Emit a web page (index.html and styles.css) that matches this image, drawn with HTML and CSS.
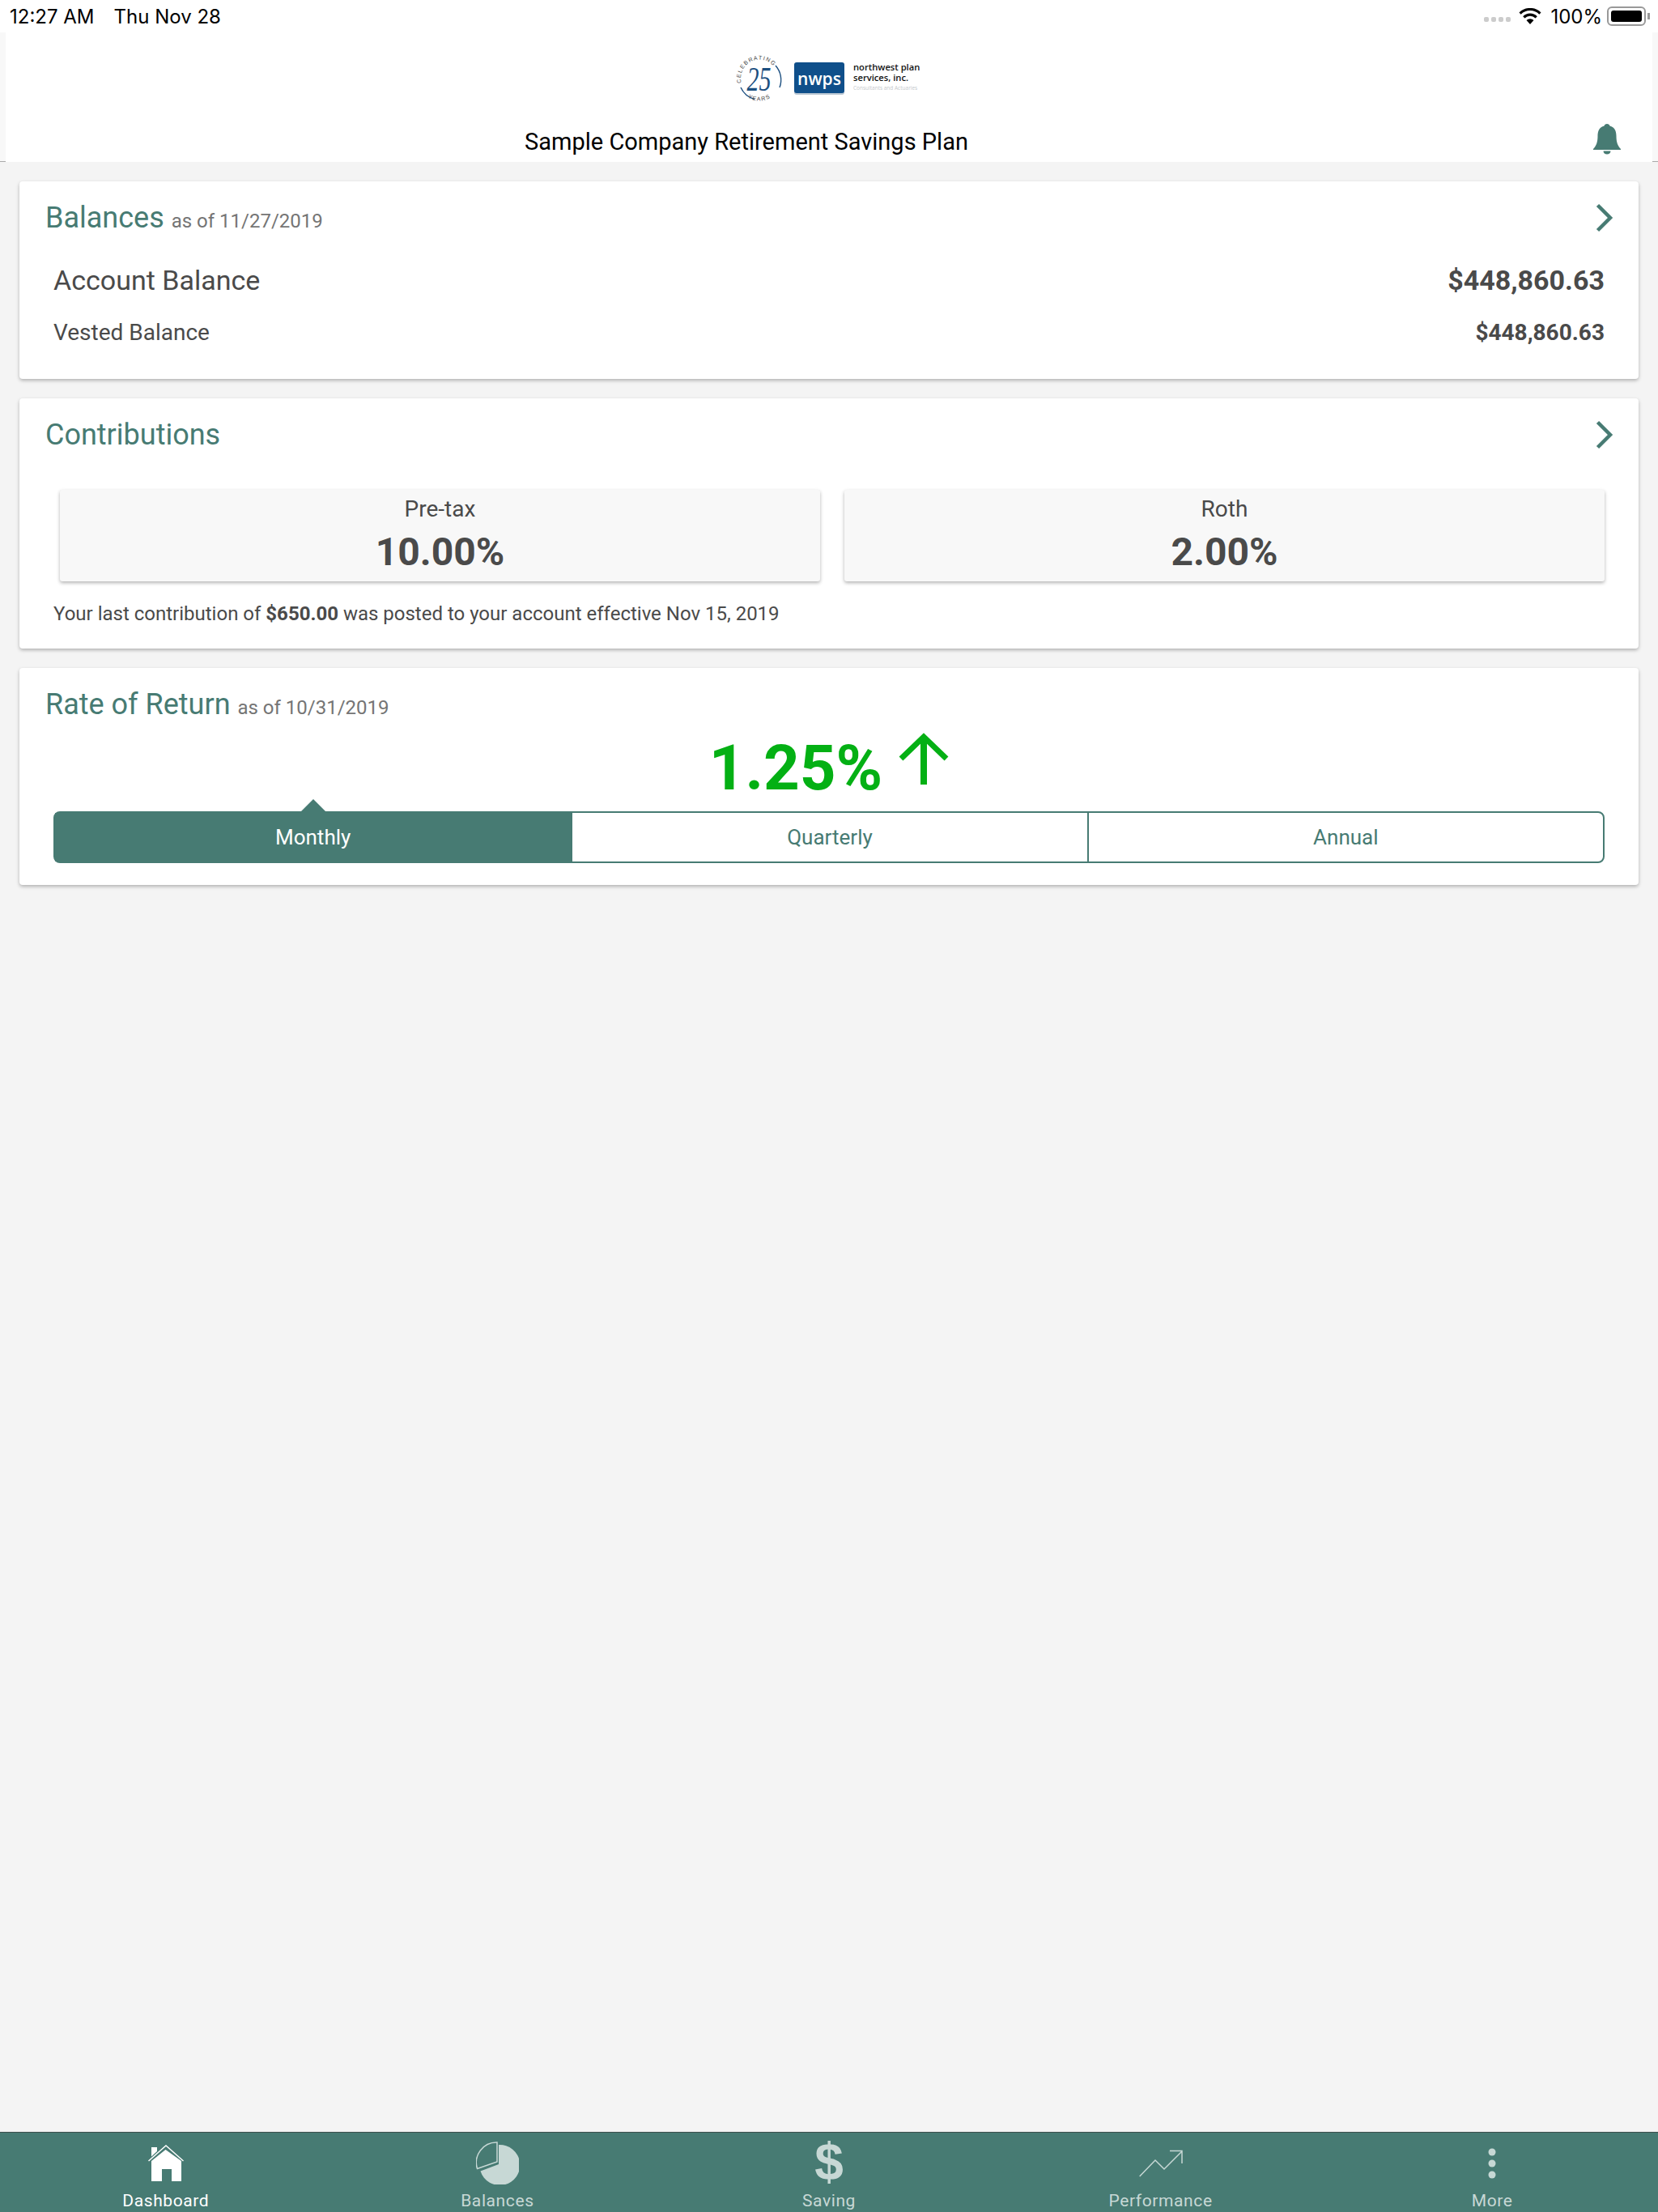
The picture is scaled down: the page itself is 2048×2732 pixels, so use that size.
FILE: index.html
```html
<!DOCTYPE html>
<html>

<head>
    <meta charset="utf-8" />
    <title>Dashboard</title>
    <link rel="stylesheet" href="styles.css">
</head>

<body>
    <div class="page">
        <div class="status-bar">
            <div class="status-left"><span>12:27 AM</span><span>Thu Nov 28</span></div>
            <div class="status-right">
                <span class="signal-dots"><i></i><i></i><i></i><i></i></span>
                <svg class="wifi-icon" width="28" height="20" viewBox="0 0 28 20">
                    <path d="M14 20 L9.5 15 A6.5 6.5 0 0 1 18.5 15 Z" fill="#000" />
                    <path d="M6.3 11.3 A11 11 0 0 1 21.7 11.3" fill="none" stroke="#000" stroke-width="3.2" />
                    <path d="M1.6 6.6 A17.6 17.6 0 0 1 26.4 6.6" fill="none" stroke="#000" stroke-width="3.2" />
                </svg>
                <span class="battery-pct">100%</span>
                <span class="battery"><span class="battery-fill"></span></span>
                <span class="battery-tip"></span>
            </div>
        </div>

        <div class="header-wrap">
            <div class="app-header">
                <div class="logo-row">
                    <svg width="240" height="66" viewBox="0 0 240 66">
                        <g fill="none" stroke="#1c4f80" stroke-width="1.4">
                            <path d="M15 44 A26.5 26.5 0 0 0 32 58.5" />
                            <path d="M58 17 A26.5 26.5 0 0 1 63 44" />
                        </g>
                        <text x="37.5" y="48" class="logo-25" textLength="30" lengthAdjust="spacingAndGlyphs">25</text>
                        <path id="arcTop" d="M15.8 38.5 A23 23 0 0 1 56.8 19.3" fill="none" />
                        <text class="logo-arc"><textPath href="#arcTop">CELEBRATING</textPath></text>
                        <path id="arcBottom" d="M19 53 A28 28 0 0 0 57 53" fill="none" />
                        <text class="logo-arc"><textPath href="#arcBottom" startOffset="50%" text-anchor="middle">YEARS</textPath></text>
                        <rect x="81" y="14" width="62" height="39" rx="3" fill="#b9c6d2" />
                        <rect x="81" y="13" width="62" height="38" rx="3" fill="#0f4f8a" />
                        <text x="112" y="41" class="logo-nwps">nwps</text>
                        <text x="154" y="23" class="logo-name">northwest plan</text>
                        <text x="154" y="36" class="logo-name">services, inc.</text>
                        <text x="154" y="47" class="logo-sub">Consultants and Actuaries</text>
                    </svg>
                </div>
                <div class="title-row">
                    <div class="plan-title">Sample Company Retirement Savings Plan</div>
                    <div class="bell-box">
                        <svg width="34" height="38" viewBox="0 0 34 38">
                            <path d="M17 0 C19 0 20 1 20.5 2.5 C26.5 4 28.5 9 28.5 15 C28.5 22 30 27 34 31 L34 32 L0 32 L0 31 C4 27 5.5 22 5.5 15 C5.5 9 7.5 4 13.5 2.5 C14 1 15 0 17 0 Z" fill="#477b73" />
                            <path d="M12.5 33.5 L21.5 33.5 C21.5 36 19.5 37.5 17 37.5 C14.5 37.5 12.5 36 12.5 33.5 Z" fill="#477b73" />
                        </svg>
                    </div>
                </div>
            </div>
        </div>

        <div class="content">
            <section class="card balances-card">
                <div class="card-head">
                    <h2>Balances <small>as of 11/27/2019</small></h2>
                    <svg class="chevron" width="22" height="36" viewBox="0 0 22 36">
                        <path d="M2.5 2.5 L18 18 L2.5 33.5" fill="none" stroke="#477b73" stroke-width="4.5" />
                    </svg>
                </div>
                <div class="balance-row balance-main"><span>Account Balance</span><b>$448,860.63</b></div>
                <div class="balance-row balance-sub"><span>Vested Balance</span><b>$448,860.63</b></div>
            </section>

            <section class="card contrib-card">
                <div class="card-head">
                    <h2>Contributions</h2>
                    <svg class="chevron" width="22" height="36" viewBox="0 0 22 36">
                        <path d="M2.5 2.5 L18 18 L2.5 33.5" fill="none" stroke="#477b73" stroke-width="4.5" />
                    </svg>
                </div>
                <div class="contrib-boxes">
                    <div class="contrib-box">
                        <div class="contrib-label">Pre-tax</div>
                        <div class="contrib-value">10.00%</div>
                    </div>
                    <div class="contrib-box">
                        <div class="contrib-label">Roth</div>
                        <div class="contrib-value">2.00%</div>
                    </div>
                </div>
                <p class="contrib-note">Your last contribution of <b>$650.00</b> was posted to your account effective Nov 15, 2019</p>
            </section>

            <section class="card return-card">
                <div class="card-head">
                    <h2>Rate of Return <small>as of 10/31/2019</small></h2>
                </div>
                <div class="return-value">
                    <span>1.25%</span>
                    <svg class="return-arrow" width="62" height="64" viewBox="0 0 62 64">
                        <path d="M31 64 L31 4" fill="none" stroke="#04b014" stroke-width="8" />
                        <path d="M3 32 L31 5 L59 32" fill="none" stroke="#04b014" stroke-width="7" />
                    </svg>
                </div>
                <div class="period-tabs">
                    <div class="period-tab active">Monthly</div>
                    <div class="period-tab">Quarterly</div>
                    <div class="period-tab">Annual</div>
                </div>
            </section>
        </div>

        <nav class="tab-bar">
            <div class="tab-item current">
                <div class="tab-icon">
                    <svg class="icon-home" width="44" height="45" viewBox="0 0 44 45">
                        <path d="M4 20 L21.5 6 L41 20 L41 45 L29 45 L29 30 L17 30 L17 45 L4 45 Z" fill="#fff" />
                        <path d="M0.5 20 L22 1 L43.5 20" fill="none" stroke="#fff" stroke-width="1.5" />
                        <path d="M4 3 L11 3 L11 8 L4 14.5 Z" fill="#fff" />
                    </svg>
                </div>
                <span>Dashboard</span>
            </div>
            <div class="tab-item">
                <div class="tab-icon">
                    <svg width="53" height="53" viewBox="0 0 53 53">
                        <path d="M28 4 A25 25 0 1 1 5.5 36.5 L28 28 Z" fill="#c7d8d5" />
                        <path d="M26 1 A25 25 0 0 0 1.5 33.5 L26 25 Z" fill="none" stroke="#c7d8d5" stroke-width="1.5" />
                    </svg>
                </div>
                <span>Balances</span>
            </div>
            <div class="tab-item">
                <div class="tab-icon">
                    <div class="dollar-icon">$</div>
                </div>
                <span>Saving</span>
            </div>
            <div class="tab-item">
                <div class="tab-icon">
                    <svg class="icon-trend" width="54" height="34" viewBox="0 0 54 34">
                        <path d="M0.7 33 L20 13 L31 24 L53 2 M38 1.5 L53 1.5 L53 17" fill="none" stroke="#c7d8d5" stroke-width="1.5" />
                    </svg>
                </div>
                <span>Performance</span>
            </div>
            <div class="tab-item">
                <div class="tab-icon">
                    <svg class="icon-more" width="10" height="38" viewBox="0 0 10 38">
                        <circle cx="5" cy="5" r="4.5" fill="#c7d8d5" />
                        <circle cx="5" cy="19" r="4.5" fill="#c7d8d5" />
                        <circle cx="5" cy="33" r="4.5" fill="#c7d8d5" />
                    </svg>
                </div>
                <span>More</span>
            </div>
        </nav>
    </div>
</body>

</html>
```

FILE: styles.css
```css
* {
    box-sizing: border-box;
}

body {
    margin: 0;
    background-color: #f4f4f4;
    font-family: Roboto, "Liberation Sans", sans-serif;
    color: #4a4a4a;
}

.page {
    height: 2732px;
    display: flex;
    flex-direction: column;
}

/* ios status bar */
.status-bar {
    height: 40px;
    padding: 0 10px 0 12px;
    background-color: #fff;
    display: flex;
    justify-content: space-between;
    align-items: center;
    font-family: Inter, "Liberation Sans", sans-serif;
    font-size: 24px;
    color: #000;
}

.status-left span:first-child {
    margin-right: 24px;
}

.status-right {
    display: flex;
    align-items: center;
}

.signal-dots {
    display: flex;
    gap: 3px;
    margin: 8px 10px 0 0;
}

.signal-dots i {
    width: 6px;
    height: 6px;
    border-radius: 2px;
    background-color: #ccc;
}

.battery-pct {
    margin: 0 6px 0 11px;
}

.battery {
    width: 48px;
    height: 24px;
    padding: 3px;
    border: 2px solid #999;
    border-radius: 6px;
}

.battery-fill {
    display: block;
    height: 100%;
    border-radius: 3px;
    background-color: #000;
}

.battery-tip {
    width: 3px;
    height: 8px;
    margin-left: 2px;
    background-color: #999;
}

/* header with logo */
.header-wrap {
    height: 160px;
    padding: 0 7px;
    background-color: #f8f8f8;
    border-bottom: 1px solid #aaa;
}

.app-header {
    height: 160px;
    position: relative;
    background-color: #fff;
    display: flex;
    flex-direction: column;
}

.logo-row {
    height: 116px;
    padding: 24px 0 0 893px;
}

.title-row {
    display: flex;
    align-items: flex-start;
}

.plan-title {
    flex: 1;
    text-align: center;
    font-size: 29px;
    line-height: 38px;
    color: #000;
}

.bell-box {
    width: 204px;
    margin-top: -3px;
    padding-left: 131px;
}

.logo-25 {
    font-family: "Liberation Serif", serif;
    font-size: 43px;
    font-style: italic;
    fill: #1c4f80;
    text-anchor: middle;
}

.logo-arc {
    font-family: "Liberation Sans", sans-serif;
    font-size: 7px;
    letter-spacing: 1.2px;
    fill: #444;
}

.logo-nwps {
    font-family: "Open Sans", sans-serif;
    font-size: 21px;
    font-weight: 600;
    fill: #fff;
    text-anchor: middle;
}

.logo-name {
    font-family: "Open Sans", sans-serif;
    font-size: 11.2px;
    font-weight: 600;
    fill: #111;
}

.logo-sub {
    font-family: "Open Sans", sans-serif;
    font-size: 6.5px;
    fill: #c5c9cc;
}

/* cards */
.content {
    flex: 1;
    padding: 24px 24px 0;
    display: flex;
    flex-direction: column;
    gap: 24px;
}

.card {
    background-color: #fff;
    border-radius: 4px;
    box-shadow: 0 2px 4px rgba(0, 0, 0, 0.28);
    padding: 0 42px 0 32px;
}

.card-head {
    height: 90px;
    display: flex;
    justify-content: space-between;
    align-items: center;
}

.card-head h2 {
    margin: 0;
    font-size: 36px;
    font-weight: 400;
    color: #477b73;
}

.card-head small {
    font-size: 24px;
    color: #757575;
}

.chevron {
    margin-right: -11px;
}

.balances-card {
    height: 244px;
}

.balance-row {
    display: flex;
    justify-content: space-between;
    padding-left: 10px;
}

.balance-main {
    font-size: 34px;
    line-height: 48px;
    margin-top: 8px;
}

.balance-sub {
    font-size: 28px;
    line-height: 40px;
    margin-top: 21px;
}

.contrib-card {
    height: 309px;
}

.contrib-boxes {
    margin-top: 23px;
    padding-left: 18px;
    display: grid;
    grid-template-columns: 1fr 1fr;
    gap: 30px;
}

.contrib-box {
    height: 113px;
    background-color: #f8f8f8;
    border-radius: 3px;
    box-shadow: 0 2px 4px rgba(0, 0, 0, 0.3);
    text-align: center;
}

.contrib-label {
    padding-top: 4px;
    font-size: 28px;
    line-height: 40px;
}

.contrib-value {
    font-size: 48px;
    font-weight: 700;
    line-height: 66px;
}

.contrib-note {
    margin: 22px 0 0 10px;
    font-size: 24px;
    line-height: 36px;
}

.return-card {
    height: 268px;
}

.return-value {
    height: 76px;
    margin-top: -5px;
    padding-left: 10px;
    display: flex;
    justify-content: center;
    align-items: center;
    gap: 20px;
    font-size: 78px;
    font-weight: 700;
    color: #04b014;
}

.return-arrow {
    margin-bottom: 22px;
}

.period-tabs {
    margin: 16px 0 0 10px;
    height: 64px;
    display: grid;
    grid-template-columns: repeat(3, 1fr);
    border: 2px solid #477b73;
    border-radius: 8px;
    font-size: 26px;
    color: #477b73;
}

.period-tab {
    display: flex;
    align-items: center;
    justify-content: center;
    border-left: 2px solid #477b73;
}

.period-tab.active {
    position: relative;
    background-color: #477b73;
    color: #fff;
    border-left: 0;
}

.period-tab.active::before {
    content: "";
    position: absolute;
    left: 50%;
    top: -17px;
    margin-left: -15px;
    border-left: 15px solid transparent;
    border-right: 15px solid transparent;
    border-bottom: 15px solid #477b73;
}

/* bottom tabs */
.tab-bar {
    height: 99px;
    background-color: #477b73;
    border-top: 1px solid #3d4f4d;
    display: grid;
    grid-template-columns: repeat(5, 1fr);
}

.tab-item {
    display: flex;
    flex-direction: column;
    align-items: center;
    padding-top: 8px;
    color: #c7d8d5;
    font-size: 21px;
    letter-spacing: 0.6px;
}

.tab-item.current {
    color: #fff;
}

.tab-item span {
    margin-top: 7px;
    line-height: 26px;
}

.tab-icon {
    height: 56px;
    display: flex;
    align-items: flex-end;
    justify-content: center;
}

.icon-home {
    margin-bottom: 4px;
}

.icon-trend {
    margin-bottom: 9px;
}

.icon-more {
    margin-bottom: 7px;
}

.dollar-icon {
    margin-bottom: -4px;
    font-family: "Liberation Sans", sans-serif;
    font-size: 64px;
    font-weight: 700;
    line-height: 64px;
    letter-spacing: 0;
}
```
